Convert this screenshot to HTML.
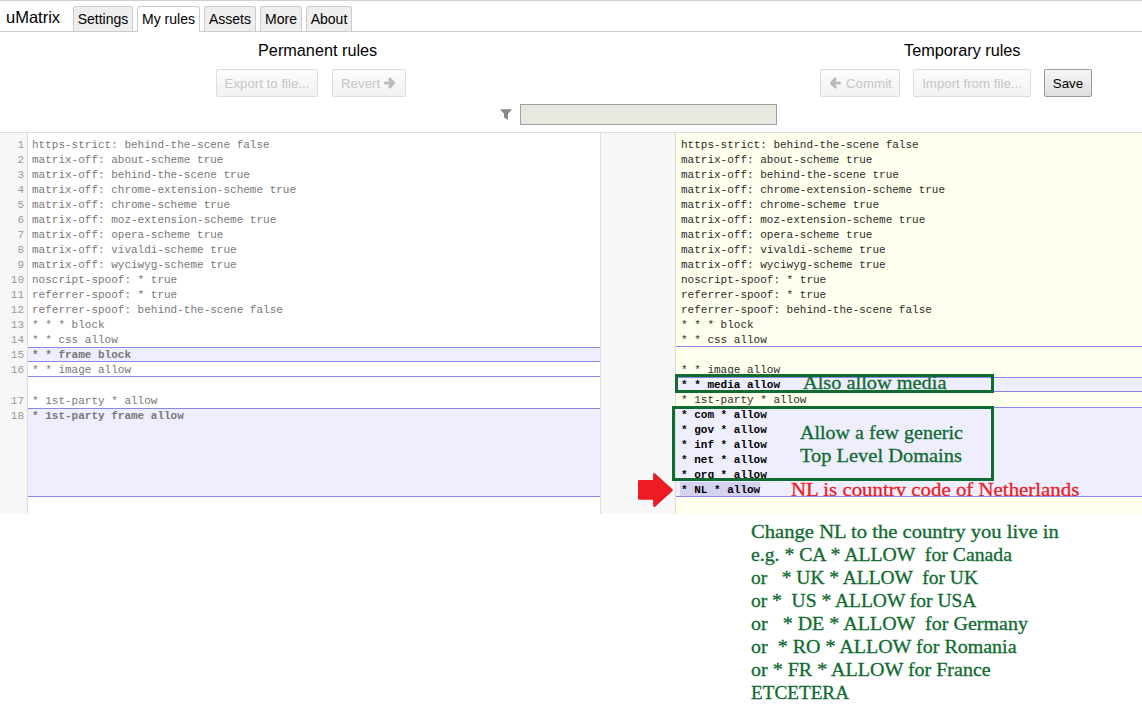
<!DOCTYPE html>
<html><head><meta charset="utf-8">
<style>
html,body{margin:0;padding:0;}
body{width:1142px;height:722px;overflow:hidden;position:relative;background:#fff;font-family:"Liberation Sans",sans-serif;color:#000;}
.a{position:absolute;}
.topline{left:0;top:0;width:1142px;height:1px;background:#d0d0d0;}
.barline{left:0;top:31px;width:1142px;height:1px;background:#ccc;}
.logo{left:6px;top:6px;font-size:16.5px;line-height:22px;}
.tab{top:6px;height:24px;border:1px solid #ccc;border-bottom:none;border-radius:3px 3px 0 0;background:#eee;font-size:14px;line-height:24px;text-align:center;box-sizing:border-box;height:25px;}
.tab.on{background:#fff;height:26px;}
.hdr{font-size:16.25px;line-height:20px;top:40px;}
.btn{top:69px;height:28px;box-sizing:border-box;border:1px solid #ddd;border-radius:2px;background:linear-gradient(#fcfcfc,#f2f2f2);color:#c6c6c6;font-size:13.3px;line-height:28px;text-align:center;}
.btn.save{border-color:#999;background:linear-gradient(#f6f6f6,#dedede);color:#000;}
.filter{left:520px;top:104px;width:257px;height:21px;box-sizing:border-box;border:1px solid #a0a0a0;background:#e8e8e0;}
.edtop{left:0;top:132px;width:1142px;height:1px;background:#ddd;}
.gutter{left:0;top:133px;width:27px;height:381px;background:#f7f7f7;border-right:1px solid #ddd;}
.gap{left:600px;top:133px;width:74px;height:381px;background:#f7f7f7;border-left:1px solid #ddd;border-right:1px solid #ddd;}
.rpane{left:676px;top:133px;width:466px;height:381px;background:#ffffee;}
.ln{font-family:"Liberation Mono",monospace;font-size:11px;line-height:15px;height:15px;white-space:pre;}
.num{left:0;width:24px;text-align:right;color:#999;}
.lt{left:32px;color:#777;}
.rt{left:681px;color:#2a2a2a;}
.rt.b{color:#000;}
.b{font-weight:bold;}
.chunkL{left:28px;width:572px;background:#eeeeff;}
.chunkR{left:676px;width:466px;background:#eeeeff;}
.bl{height:1px;background:#8888ee;}
.grn{font-family:"Liberation Serif",serif;color:#0f6b2f;font-size:19px;line-height:20px;white-space:pre;transform-origin:0 0;-webkit-text-stroke:0.3px currentColor;}
.gbox{border:3px solid #0f6b2f;box-sizing:border-box;}
</style></head><body>
<div class="a topline"></div>
<div class="a barline"></div>
<div class="a logo">uMatrix</div>
<div class="a tab" style="left:73px;width:60px;">Settings</div>
<div class="a tab on" style="left:137px;width:63px;">My rules</div>
<div class="a tab" style="left:204px;width:52px;">Assets</div>
<div class="a tab" style="left:260px;width:42px;">More</div>
<div class="a tab" style="left:306px;width:46px;">About</div>

<div class="a hdr" style="left:258px;">Permanent rules</div>
<div class="a hdr" style="left:904px;">Temporary rules</div>

<div class="a btn" style="left:216px;width:102px;">Export to file...</div>
<div class="a btn" style="left:332px;width:74px;text-align:left;padding-left:8px;">Revert</div>
<svg class="a" style="left:384px;top:77px" width="12" height="12" viewBox="0 0 12 12"><path d="M1.6 6H9.6M5.8 2.2L9.6 6 5.8 9.8" fill="none" stroke="#bbb" stroke-width="3.1" stroke-linecap="round" stroke-linejoin="round"/></svg>
<div class="a btn" style="left:820px;width:80px;text-align:left;padding-left:25px;">Commit</div>
<svg class="a" style="left:829px;top:77px" width="12" height="12" viewBox="0 0 12 12"><path d="M10.4 6H2.4M6.2 2.2L2.4 6 6.2 9.8" fill="none" stroke="#bbb" stroke-width="3.1" stroke-linecap="round" stroke-linejoin="round"/></svg>
<div class="a btn" style="left:913px;width:118px;">Import from file...</div>
<div class="a btn save" style="left:1044px;width:48px;">Save</div>

<svg class="a" style="left:500px;top:109px" width="12" height="12" viewBox="0 0 12 12"><path d="M0 0.3h12L8 4.8v6.2L4 8.6V4.8z" fill="#888"/></svg>
<div class="a filter"></div>

<div class="a edtop"></div>
<div class="a gutter"></div>
<div class="a gap"></div>
<div class="a rpane"></div>

<!--C-->
<div class="a chunkL" style="top:347px;height:15px;"></div>
<div class="a chunkL" style="top:408px;height:89px;"></div>
<div class="a chunkR" style="top:377px;height:15px;"></div>
<div class="a chunkR" style="top:407px;height:90px;"></div>
<div class="a bl" style="left:28px;width:572px;top:347px;"></div>
<div class="a bl" style="left:28px;width:572px;top:361px;"></div>
<div class="a bl" style="left:28px;width:572px;top:376px;"></div>
<div class="a bl" style="left:28px;width:572px;top:408px;"></div>
<div class="a bl" style="left:28px;width:572px;top:496px;"></div>
<div class="a bl" style="left:676px;width:466px;top:346px;"></div>
<div class="a bl" style="left:676px;width:466px;top:377px;"></div>
<div class="a bl" style="left:676px;width:466px;top:391px;"></div>
<div class="a bl" style="left:676px;width:466px;top:407px;"></div>
<div class="a bl" style="left:676px;width:466px;top:496px;"></div>
<div class="a" style="left:680px;top:482px;width:80px;height:14px;background:#d4d2ef;"></div>
<div class="a ln num" style="top:138px">1</div>
<div class="a ln lt" style="top:138px">https-strict: behind-the-scene false</div>
<div class="a ln rt" style="top:138px">https-strict: behind-the-scene false</div>
<div class="a ln num" style="top:153px">2</div>
<div class="a ln lt" style="top:153px">matrix-off: about-scheme true</div>
<div class="a ln rt" style="top:153px">matrix-off: about-scheme true</div>
<div class="a ln num" style="top:168px">3</div>
<div class="a ln lt" style="top:168px">matrix-off: behind-the-scene true</div>
<div class="a ln rt" style="top:168px">matrix-off: behind-the-scene true</div>
<div class="a ln num" style="top:183px">4</div>
<div class="a ln lt" style="top:183px">matrix-off: chrome-extension-scheme true</div>
<div class="a ln rt" style="top:183px">matrix-off: chrome-extension-scheme true</div>
<div class="a ln num" style="top:198px">5</div>
<div class="a ln lt" style="top:198px">matrix-off: chrome-scheme true</div>
<div class="a ln rt" style="top:198px">matrix-off: chrome-scheme true</div>
<div class="a ln num" style="top:213px">6</div>
<div class="a ln lt" style="top:213px">matrix-off: moz-extension-scheme true</div>
<div class="a ln rt" style="top:213px">matrix-off: moz-extension-scheme true</div>
<div class="a ln num" style="top:228px">7</div>
<div class="a ln lt" style="top:228px">matrix-off: opera-scheme true</div>
<div class="a ln rt" style="top:228px">matrix-off: opera-scheme true</div>
<div class="a ln num" style="top:243px">8</div>
<div class="a ln lt" style="top:243px">matrix-off: vivaldi-scheme true</div>
<div class="a ln rt" style="top:243px">matrix-off: vivaldi-scheme true</div>
<div class="a ln num" style="top:258px">9</div>
<div class="a ln lt" style="top:258px">matrix-off: wyciwyg-scheme true</div>
<div class="a ln rt" style="top:258px">matrix-off: wyciwyg-scheme true</div>
<div class="a ln num" style="top:273px">10</div>
<div class="a ln lt" style="top:273px">noscript-spoof: * true</div>
<div class="a ln rt" style="top:273px">noscript-spoof: * true</div>
<div class="a ln num" style="top:288px">11</div>
<div class="a ln lt" style="top:288px">referrer-spoof: * true</div>
<div class="a ln rt" style="top:288px">referrer-spoof: * true</div>
<div class="a ln num" style="top:303px">12</div>
<div class="a ln lt" style="top:303px">referrer-spoof: behind-the-scene false</div>
<div class="a ln rt" style="top:303px">referrer-spoof: behind-the-scene false</div>
<div class="a ln num" style="top:318px">13</div>
<div class="a ln lt" style="top:318px">* * * block</div>
<div class="a ln rt" style="top:318px">* * * block</div>
<div class="a ln num" style="top:333px">14</div>
<div class="a ln lt" style="top:333px">* * css allow</div>
<div class="a ln rt" style="top:333px">* * css allow</div>
<div class="a ln num" style="top:348px">15</div>
<div class="a ln lt b" style="top:348px">* * frame block</div>
<div class="a ln num" style="top:363px">16</div>
<div class="a ln lt" style="top:363px">* * image allow</div>
<div class="a ln num" style="top:394px">17</div>
<div class="a ln lt" style="top:394px">* 1st-party * allow</div>
<div class="a ln num" style="top:409px">18</div>
<div class="a ln lt b" style="top:409px">* 1st-party frame allow</div>
<div class="a ln rt" style="top:363px">* * image allow</div>
<div class="a ln rt b" style="top:378px">* * media allow</div>
<div class="a ln rt" style="top:393px">* 1st-party * allow</div>
<div class="a ln rt b" style="top:408px">* com * allow</div>
<div class="a ln rt b" style="top:423px">* gov * allow</div>
<div class="a ln rt b" style="top:438px">* inf * allow</div>
<div class="a ln rt b" style="top:453px">* net * allow</div>
<div class="a ln rt b" style="top:468px">* org * allow</div>
<div class="a ln rt b" style="top:483px">* NL * allow</div>
<!--/C-->
<div id="ann">
<div class="a gbox" style="left:675px;top:374px;width:319px;height:19px;"></div>
<div class="a gbox" style="left:672px;top:406px;width:322px;height:75px;"></div>
<div class="a grn" style="left:803px;top:373px;transform:scaleX(1.07);">Also allow media</div>
<div class="a grn" style="left:800px;top:423px;transform:scaleX(1.054);">Allow a few generic</div>
<div class="a grn" style="left:800px;top:446px;transform:scaleX(1.075);">Top Level Domains</div>
<div class="a" style="left:780px;top:476px;width:362px;height:20px;overflow:hidden;"><div class="a grn" style="left:11px;top:4px;color:#ed1c24;transform:scaleX(1.098);">NL is country code of Netherlands</div></div>
<svg class="a" style="left:630px;top:465px" width="50" height="50" viewBox="630 465 50 50"><path d="M639.2 481.2H654.3V474.3L671.7 490.1L654.3 505.8V498.6H639.2Z" fill="#ed1c24" stroke="#ed1c24" stroke-width="2.4" stroke-linejoin="round"/></svg>
<div class="a grn" style="left:751px;top:522px;transform:scaleX(1.085);">Change NL to the country you live in</div>
<div class="a grn" style="left:751px;top:545px;transform:scaleX(1.038);">e.g. * CA * ALLOW  for Canada</div>
<div class="a grn" style="left:751px;top:568px;transform:scaleX(1.023);">or   * UK * ALLOW  for UK</div>
<div class="a grn" style="left:751px;top:591px;transform:scaleX(1.026);">or *  US * ALLOW for USA</div>
<div class="a grn" style="left:751px;top:614px;transform:scaleX(1.053);">or   * DE * ALLOW  for Germany</div>
<div class="a grn" style="left:751px;top:637px;transform:scaleX(1.052);">or  * RO * ALLOW for Romania</div>
<div class="a grn" style="left:751px;top:660px;transform:scaleX(1.053);">or * FR * ALLOW for France</div>
<div class="a grn" style="left:751px;top:683px;transform:scaleX(1.009);">ETCETERA</div>
</div>
</body></html>
